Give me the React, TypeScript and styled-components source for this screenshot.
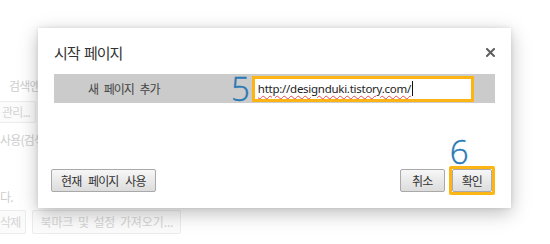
import React from "react";
import styled, { createGlobalStyle } from "styled-components";

const GlobalStyle = createGlobalStyle`
  html, body {
    margin: 0;
    padding: 0;
    background: #ffffff;
  }
  body {
    font-family: "Noto Sans CJK KR", "Noto Sans", sans-serif;
  }
`;

const Screen = styled.div`
  position: relative;
  width: 550px;
  height: 244px;
  overflow: hidden;
  background: #ffffff;
`;

/* faded settings page behind the dialog */
const Page = styled.div`
  display: flex;
  flex-direction: column;
  padding-top: 77px;
  color: #cdcdcd;
  font-size: 12px;
  letter-spacing: -0.8px;
  word-spacing: 2px;
`;

const PageLine = styled.div<{ $top?: number; $indent?: number }>`
  height: 18px;
  line-height: 18px;
  margin-top: ${(p) => p.$top ?? 0}px;
  padding-left: ${(p) => p.$indent ?? 0}px;
  white-space: nowrap;
`;

const PageButtons = styled.div<{ $top?: number; $shift?: number }>`
  display: flex;
  gap: 6px;
  margin-top: ${(p) => p.$top ?? 0}px;
  margin-left: ${(p) => p.$shift ?? 0}px;
`;

const PageButton = styled.div<{ $h?: number; $wide?: boolean }>`
  height: ${(p) => p.$h ?? 20}px;
  line-height: ${(p) => p.$h ?? 20}px;
  padding: 0 ${(p) => (p.$wide ? 7 : 5)}px 0 ${(p) => (p.$wide ? 7 : 4)}px;
  border: 1px solid #ececec;
  border-radius: 2px;
  background: #fbfbfb;
  color: #d4d4d4;
  letter-spacing: ${(p) => (p.$wide ? "-0.1px" : "-0.8px")};
  white-space: nowrap;
`;

const Dialog = styled.div`
  position: absolute;
  left: 38px;
  top: 28px;
  width: 473px;
  height: 180px;
  box-sizing: border-box;
  background: #ffffff;
  box-shadow: 0 5px 18px rgba(0, 0, 0, 0.26), 0 0 4px rgba(0, 0, 0, 0.1);
  display: flex;
  flex-direction: column;
  padding: 13px 16px 13px 13px;
`;

const Header = styled.div`
  display: flex;
  align-items: center;
  justify-content: space-between;
  padding-left: 3px;
  height: 22px;
`;

const Title = styled.span`
  font-size: 15px;
  color: #333333;
  letter-spacing: -1px;
  word-spacing: 2px;
`;

const Close = styled.svg`
  width: 9px;
  height: 9px;
`;

const InputRow = styled.div`
  display: flex;
  align-items: center;
  margin: 11px 0 0 3px;
  height: 29px;
  background: #cbcbcb;
`;

const RowLabel = styled.div`
  width: 177px;
  box-sizing: border-box;
  padding-left: 34px;
  font-size: 12px;
  letter-spacing: -1px;
  word-spacing: 4px;
  color: #444444;
`;

const StepNumber = styled.span`
  font-family: "Open Sans", "Lato", sans-serif;
  font-weight: 300;
  font-size: 33px;
  line-height: 1;
  color: #2878b4;
  -webkit-text-stroke: 0.4px #2878b4;
`;

const RowNumber = styled(StepNumber)`
  margin-right: 2px;
`;

const UrlBox = styled.div`
  width: 222px;
  height: 26px;
  box-sizing: border-box;
  border: 3px solid #fcb514;
  background: #ffffff;
  display: flex;
  align-items: center;
  padding-left: 3px;
  font-family: "Noto Sans", "DejaVu Sans", sans-serif;
  font-size: 11.5px;
  letter-spacing: -0.27px;
  color: #222222;
`;

const Url = styled.span`
  text-decoration: underline wavy #e34b4b;
  text-decoration-thickness: 1px;
  text-underline-offset: 2px;
`;

const Caret = styled.span`
  display: inline-block;
  width: 1px;
  height: 15px;
  margin-left: 1px;
  background: #111111;
`;

const Footer = styled.div`
  margin-top: auto;
  display: flex;
  align-items: center;
`;

const Button = styled.button<{ $w?: number }>`
  height: 23px;
  min-width: ${(p) => p.$w ?? 0}px;
  padding: 0 9px;
  border: 1px solid #a9a9a9;
  border-radius: 2px;
  background: linear-gradient(#f7f7f7, #dcdcdc);
  font-family: "Noto Sans CJK KR", sans-serif;
  font-size: 12px;
  letter-spacing: -0.9px;
  word-spacing: 5px;
  color: #333333;
  line-height: 21px;
  cursor: pointer;
`;

const Spacer = styled.div`
  flex: 1;
`;

const Highlight = styled.div`
  position: relative;
  margin-left: 4px;
  border: 3px solid #fcb514;
  border-radius: 2px;
  display: flex;
`;

const NumberAbove = styled(StepNumber)`
  position: absolute;
  left: -2px;
  bottom: 24px;
`;

export default function App() {
  return (
    <Screen>
      <GlobalStyle />
      <Page>
        <PageLine $indent={9}>검색엔진</PageLine>
        <PageButtons $top={6} $shift={-3}>
          <PageButton>관리...</PageButton>
        </PageButtons>
        <PageLine $top={8}>사용(검색</PageLine>
        <PageLine $top={39}>다.</PageLine>
        <PageButtons $top={4} $shift={-5}>
          <PageButton $h={22}>삭제</PageButton>
          <PageButton $h={22} $wide>
            북마크 및 설정 가져오기...
          </PageButton>
        </PageButtons>
      </Page>

      <Dialog>
        <Header>
          <Title>시작 페이지</Title>
          <Close viewBox="0 0 9 9">
            <path d="M1 1 L8 8 M8 1 L1 8" stroke="#5f5f5f" strokeWidth="2" strokeLinecap="square" />
          </Close>
        </Header>

        <InputRow>
          <RowLabel>새 페이지 추가</RowLabel>
          <RowNumber>5</RowNumber>
          <UrlBox>
            <Url>http://designduki.tistory.com/</Url>
            <Caret />
          </UrlBox>
        </InputRow>

        <Footer>
          <Button>현재 페이지 사용</Button>
          <Spacer />
          <Button $w={45}>취소</Button>
          <Highlight>
            <NumberAbove>6</NumberAbove>
            <Button $w={40}>확인</Button>
          </Highlight>
        </Footer>
      </Dialog>
    </Screen>
  );
}
